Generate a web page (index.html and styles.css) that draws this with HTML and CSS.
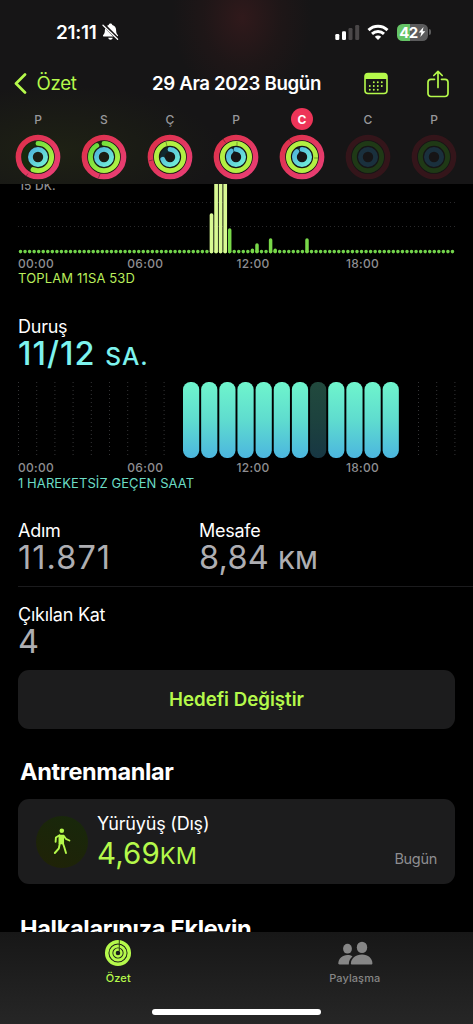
FILE: index.html
```html
<!DOCTYPE html>
<html lang="tr">
<head>
<meta charset="utf-8">
<title>Özet</title>
<link rel="stylesheet" href="styles.css">
</head>
<body>
<svg class="defs" width="0" height="0">
  <defs>
    <linearGradient id="move" x1="0" y1="0" x2="1" y2="1"><stop offset="0" stop-color="#dc3048"/><stop offset="1" stop-color="#e93f77"/></linearGradient>
    <linearGradient id="exercise" x1="1" y1="0" x2="0" y2="1"><stop offset="0" stop-color="#62d83c"/><stop offset="1" stop-color="#b8f545"/></linearGradient>
    <linearGradient id="stand" x1="1" y1="0" x2="0" y2="1"><stop offset="0" stop-color="#4fb4dc"/><stop offset="1" stop-color="#72efd8"/></linearGradient>
    <linearGradient id="hour" x1="0" y1="0" x2="0" y2="1"><stop offset="0" stop-color="#6ff5cc"/><stop offset=".5" stop-color="#5fdccf"/><stop offset="1" stop-color="#4cb6df"/></linearGradient>
  </defs>
</svg>
<div class="screen">
  <header class="header">
    <div class="status">
      <div class="status-left">
        <span class="time">21:11</span>
        <svg width="17" height="18" viewBox="0 0 17 18"><path d="M8.500 .6c1 0 1.700.7 1.800 1.400 2.400.7 3.800 2.500 3.800 5 0 3 .8 4 1.700 4.900.5.600.2 1.600-.7 1.600H1.900c-.9 0-1.200-1-.7-1.600.9-.9 1.700-1.900 1.700-4.900 0-2.500 1.400-4.300 3.800-5C6.800 1.300 7.500.6 8.500.6zM6.200 14.700h4.600c-.2 1.300-1.200 2-2.300 2s-2.100-.7-2.300-2z" fill="#fff"/><path d="M1.600 1.700l14.200 14.200" stroke="#171415" stroke-width="3.200"/><path d="M1 2.200l14.600 14" stroke="#fff" stroke-width="1.300" stroke-linecap="round"/></svg>
      </div>
      <div class="status-right">
        <svg width="25" height="17" viewBox="0 0 25 17"><g fill="#fff"><rect x=".3" y="10" width="4" height="6" rx="1.200"/><rect x="7" y="7.300" width="4" height="8.700" rx="1.200"/></g><g fill="#4a4748"><rect x="13.500" y="4" width="4" height="12" rx="1.200"/><rect x="20.200" y="1" width="4" height="15" rx="1.200"/></g></svg>
        <svg class="wifi" width="22" height="17" viewBox="0 0 22 17"><g fill="none" stroke="#fff" stroke-width="2.900"><path d="M1.500 6.100C6.800.9 15.200.9 20.500 6.100"/><path d="M5 9.900c3.400-3.200 8.600-3.200 12 0"/></g><path d="M7.800 12.700c1.900-1.700 4.500-1.700 6.400 0L11 16z" fill="#fff"/></svg>
        <div class="battery"><span>42</span><svg width="8" height="12" viewBox="0 0 9 12"><path d="M6.200.5L.8 6.700h3L2.600 11.500 8.200 5.200h-3z" fill="#fff"/></svg></div>
        <i class="battery-tip"></i>
      </div>
    </div>
    <nav class="navbar">
      <a class="back"><svg width="13" height="21" viewBox="0 0 13 21"><path d="M11 1.500L2 10.500l9 9" fill="none" stroke="#b5f94b" stroke-width="2.700" stroke-linecap="round" stroke-linejoin="round"/></svg><span>Özet</span></a>
      <h1 class="title">29 Ara 2023 Bugün</h1>
      <div class="actions">
        <svg width="24" height="23" viewBox="0 0 24 23"><rect x="1" y="1.500" width="22" height="20" rx="3" fill="none" stroke="#b5f94b" stroke-width="1.600"/><path d="M1 7V4.500a3 3 0 0 1 3-3h16a3 3 0 0 1 3 3V7z" fill="#b5f94b"/><g stroke="#b5f94b" stroke-width="1.900" stroke-linecap="round" stroke-dasharray="0 4"><path d="M9.800 10.200h8.200M5.800 14h12.300M5.800 17.700h8.300"/></g></svg>
        <svg width="22" height="28" viewBox="0 0 22 28"><g fill="none" stroke="#b5f94b" stroke-width="1.700" stroke-linecap="round" stroke-linejoin="round"><path d="M7.500 9.300H4a3 3 0 0 0-3 3v11.200a3 3 0 0 0 3 3h14a3 3 0 0 0 3-3V12.300a3 3 0 0 0-3-3h-3.500"/><path d="M11 17.500V1.500M6.800 5.500L11 1.300l4.200 4.200"/></g></svg>
      </div>
    </nav>
    <div class="week">
      <div class="day"><span class="letter">P</span>
        <svg class="rings" viewBox="0 0 46 46"><circle class="m" cx="23" cy="23" r="19.600"/><path d="M13 39.500l-2.500 3.500" class="seam"/><circle class="track" cx="23" cy="23" r="13.600"/><circle class="e" cx="23" cy="23" r="13.600" pathLength="100" stroke-dasharray="56 100"/><circle class="s" cx="23" cy="23" r="7.600"/></svg></div>
      <div class="day"><span class="letter">S</span>
        <svg class="rings" viewBox="0 0 46 46"><circle class="m" cx="23" cy="23" r="19.600"/><path d="M19 40l-1.500 4" class="seam"/><circle class="track" cx="23" cy="23" r="13.600"/><circle class="e" cx="23" cy="23" r="13.600" pathLength="100" stroke-dasharray="91 100"/><circle class="s" cx="23" cy="23" r="7.600"/></svg></div>
      <div class="day"><span class="letter">Ç</span>
        <svg class="rings" viewBox="0 0 46 46"><circle class="m" cx="23" cy="23" r="19.600"/><path d="M1.500 27l4-1" class="seam"/><circle class="e full" cx="23" cy="23" r="13.600"/><path d="M19 8l1 4" class="seam"/><circle class="track blue" cx="23" cy="23" r="7.600"/><circle class="s" cx="23" cy="23" r="7.600" pathLength="100" stroke-dasharray="70 100"/></svg></div>
      <div class="day"><span class="letter">P</span>
        <svg class="rings" viewBox="0 0 46 46"><circle class="m" cx="23" cy="23" r="19.600"/><path d="M10 5l2.500 3.500" class="seam"/><circle class="e full" cx="23" cy="23" r="13.600"/><path d="M24 8v4" class="seam"/><circle class="track blue" cx="23" cy="23" r="7.600"/><circle class="s" cx="23" cy="23" r="7.600" pathLength="100" stroke-dasharray="89 100"/></svg></div>
      <div class="day"><span class="letter selected">C</span>
        <svg class="rings" viewBox="0 0 46 46"><circle class="m" cx="23" cy="23" r="19.600"/><path d="M10 5l2.500 3.500" class="seam"/><circle class="e full" cx="23" cy="23" r="13.600"/><path d="M35 24h4" class="seam"/><circle class="track blue" cx="23" cy="23" r="7.600"/><circle class="s" cx="23" cy="23" r="7.600" pathLength="100" stroke-dasharray="88 100"/></svg></div>
      <div class="day"><span class="letter">C</span>
        <svg class="rings empty" viewBox="0 0 46 46"><circle class="m" cx="23" cy="23" r="19.600"/><circle class="e" cx="23" cy="23" r="13.600"/><circle class="s" cx="23" cy="23" r="7.600"/></svg></div>
      <div class="day"><span class="letter">P</span>
        <svg class="rings empty" viewBox="0 0 46 46"><circle class="m" cx="23" cy="23" r="19.600"/><circle class="e" cx="23" cy="23" r="13.600"/><circle class="s" cx="23" cy="23" r="7.600"/></svg></div>
    </div>
  </header>

  <main class="content">
    <section class="exercise">
      <div class="exercise-chart">
        <span class="scale">15 DK.</span>
        <svg width="437" height="71" viewBox="18 184 437 71">
          <g stroke="#29292b" stroke-width="1" stroke-dasharray="1 3"><path d="M18 202.500h437M18 226.500h437"/></g>
          <path d="M20.500 251.600H453" stroke="#72d34b" stroke-width="3.600" stroke-linecap="round" stroke-dasharray="0 4.547"/>
          <g stroke="#d9f994" stroke-width="3.700" stroke-linecap="round"><path d="M211.500 215v36.400M216.100 170v81.400M220.600 170v81.400M225.200 170v81.400"/></g>
          <g stroke="#79d849" stroke-width="3.500" stroke-linecap="round"><path d="M229.700 230v21.400M252.400 250.300v1M257 245v6.400M270.600 240v11.400M275.200 250.300v1M307 240v11.400"/></g>
        </svg>
      </div>
      <div class="hours"><span>00:00</span><span>06:00</span><span>12:00</span><span>18:00</span></div>
      <p class="summary green">TOPLAM 11SA 53D</p>
    </section>

    <section class="stand">
      <h2 class="label">Duruş</h2>
      <p class="value aqua">11/12 <small>SA.</small></p>
      <svg class="stand-chart" width="438" height="76" viewBox="18 382 438 76">
        <path stroke="#343436" stroke-width="1" stroke-dasharray="1 3" d="M18.500 382v76M36.700 382v76M54.900 382v76M73.100 382v76M91.300 382v76M109.500 382v76M127.700 382v76M145.900 382v76M164.100 382v76M418.500 382v76M436.700 382v76M454.900 382v76"/>
        <g fill="url(#hour)"><rect x="183" y="382" width="16.200" height="76" rx="7.500"/><rect x="201.150" y="382" width="16.200" height="76" rx="7.500"/><rect x="219.300" y="382" width="16.200" height="76" rx="7.500"/><rect x="237.450" y="382" width="16.200" height="76" rx="7.500"/><rect x="255.600" y="382" width="16.200" height="76" rx="7.500"/><rect x="273.750" y="382" width="16.200" height="76" rx="7.500"/><rect x="291.900" y="382" width="16.200" height="76" rx="7.500"/><rect x="310.050" y="382" width="16.200" height="76" rx="7.500" opacity=".3"/><rect x="328.200" y="382" width="16.200" height="76" rx="7.500"/><rect x="346.350" y="382" width="16.200" height="76" rx="7.500"/><rect x="364.500" y="382" width="16.200" height="76" rx="7.500"/><rect x="382.650" y="382" width="16.200" height="76" rx="7.500"/></g>
      </svg>
      <div class="hours"><span>00:00</span><span>06:00</span><span>12:00</span><span>18:00</span></div>
      <p class="summary teal">1 HAREKETSİZ GEÇEN SAAT</p>
    </section>

    <section class="stats">
      <div class="stat"><h2 class="label">Adım</h2><p class="value">11.871</p></div>
      <div class="stat"><h2 class="label">Mesafe</h2><p class="value distance">8,84 <small>KM</small></p></div>
    </section>
    <section class="stat floors"><h2 class="label">Çıkılan Kat</h2><p class="value">4</p></section>

    <button class="goal">Hedefi Değiştir</button>

    <h2 class="heading">Antrenmanlar</h2>
    <article class="workout">
      <div class="workout-icon">
        <svg width="18" height="27" viewBox="0 0 18 27"><circle cx="8.800" cy="2.800" r="2.300" fill="#b5f94b"/><path d="M6.300 7.500h4v8h-4z" fill="#b5f94b" stroke="#b5f94b" stroke-width="1.500" stroke-linejoin="round"/><g fill="none" stroke="#b5f94b" stroke-width="1.900" stroke-linecap="round" stroke-linejoin="round"><path d="M6.500 7.300L2.900 9.500l-.3 4.200M10.700 7.800l2.200 3 3.500 1.700M6.800 15.500l-1 5-4 4.500M10 15.500l1.300 3.800 1.700 5.700"/></g></svg>
      </div>
      <div class="workout-text"><h3>Yürüyüş (Dış)</h3><p>4,69<small>KM</small></p></div>
      <span class="when">Bugün</span>
    </article>
    <h2 class="heading next">Halkalarınıza Ekleyin</h2>
  </main>

  <footer class="tabbar">
    <div class="tabs">
      <div class="tab active">
        <svg width="28" height="28" viewBox="0 0 28 28"><g fill="none" stroke="#b5f94b"><circle cx="14" cy="14" r="11.300" stroke-width="3.500"/><circle cx="14" cy="14" r="7.100" stroke-width="3"/><circle cx="14" cy="14" r="3.500" stroke-width="2.400"/></g><path d="M15.300 1v11" stroke="#2c4312" stroke-width="1"/></svg>
        <span>Özet</span>
      </div>
      <div class="tab">
        <svg width="36" height="28" viewBox="0 0 36 28"><g fill="#868686"><ellipse cx="10.500" cy="9.700" rx="4.400" ry="4.900"/><path d="M1.300 24.800c0-5 4-8.700 9.200-8.700 1.900 0 3.600.500 5 1.300-2.300 1.700-3.600 4-3.700 8H2.500c-.8 0-1.200-.1-1.200-.6z"/><ellipse cx="25" cy="8.400" rx="5.200" ry="5.700"/><path d="M13.900 24.400c0-5 4.900-8.900 11.100-8.900s10.400 3.900 10.400 8.900c0 .8-.4 1-1.300 1H15.200c-.9 0-1.300-.2-1.300-1z"/></g></svg>
        <span>Paylaşma</span>
      </div>
    </div>
    <i class="home"></i>
  </footer>
</div>
</body>
</html>
```
FILE: styles.css
```css
* { box-sizing: border-box; margin: 0; padding: 0; }
body { background: #000; color: #fff; font-family: Inter, "Liberation Sans", sans-serif; }
svg { display: block; flex: none; }
.defs { position: absolute; }
.screen { width: 473px; height: 1024px; display: flex; flex-direction: column; overflow: hidden; background: #000; }

.header {
  flex: none; height: 184px;
  background:
    radial-gradient(ellipse 70px 85px at 242px 18px, #30191b, #24171899 55%, transparent),
    radial-gradient(ellipse 160px 65px at 60px 150px, #1e2114, transparent),
    #161516;
}
.status { height: 64px; padding: 0 42px 0 56px; display: flex; justify-content: space-between; align-items: center; }
.status-left { display: flex; align-items: center; gap: 5px; }
.time { font-size: 19px; font-weight: 600; letter-spacing: -.3px; }
.status-right { display: flex; align-items: center; }
.wifi { margin: 0 8px 0 7px; }
.battery { width: 31px; height: 17px; border-radius: 5.5px; display: flex; align-items: center; justify-content: center; background: linear-gradient(90deg, #65c466 43%, #5b5b5c 43%); font-size: 15px; font-weight: 700; letter-spacing: -.6px; }
.battery-tip { width: 2px; height: 6px; margin-left: 1px; border-radius: 0 2px 2px 0; background: #5b5b5c; }
.navbar { height: 39px; padding: 0 24px 0 14px; display: grid; grid-template-columns: 1fr auto 1fr; align-items: center; }
.back { display: flex; align-items: center; gap: 9.5px; color: #b5f94b; font-size: 18.7px; letter-spacing: -.35px; }
.title { font-size: 18.7px; font-weight: 600; letter-spacing: -.36px; transform: translateX(5px); }
.actions { display: flex; justify-content: flex-end; align-items: center; gap: 39px; }
.week { display: grid; grid-template-columns: repeat(7, 66px); padding-left: 5px; padding-top: 5px; }
.day { display: flex; flex-direction: column; align-items: center; gap: 4px; }
.letter { width: 22px; height: 22px; border-radius: 50%; display: grid; place-items: center; font-size: 12px; font-weight: 500; color: #98989b; }
.letter.selected { background: #ed3458; color: #fff; font-weight: 700; }
.rings { width: 46px; height: 46px; }
.rings circle { fill: none; stroke-width: 4.9; }
.rings .m { stroke: url(#move); stroke-width: 5.5; }
.rings .e, .rings .s { stroke-linecap: round; transform: rotate(-90deg); transform-origin: 23px 23px; }
.rings .e { stroke: #99ea43; }
.rings:not(.empty) .e:not(.full) { stroke: url(#exercise); }
.rings .full { stroke: #b2ef43; }
.rings .s { stroke: url(#stand); stroke-width: 4.8; }
.rings .track { stroke: #172b0c; }
.rings .track.blue { stroke: #10292e; }
.seam { stroke: #17151680; stroke-width: .8; }
.rings.empty .m { stroke: #34151a; }
.rings.empty .e { stroke: #1f3916; }
.rings.empty .s { stroke: #1a303d; }

.content { flex: 1; min-height: 0; overflow: hidden; padding: 0 18px; display: flex; flex-direction: column; }
.content > * { flex: none; }
.exercise-chart { height: 71px; position: relative; }
.scale { position: absolute; left: 1px; top: -5.500px; font-size: 12px; line-height: 14px; font-weight: 500; color: #8e8e91; letter-spacing: .1px; }
.hours { display: grid; grid-template-columns: repeat(4, 109.3px); height: 16px; line-height: 16px; font-size: 12px; font-weight: 500; letter-spacing: .3px; color: #8e8e91; }
.exercise .hours { margin-top: 1px; }
.summary { font-size: 13px; height: 16px; line-height: 16px; margin-top: -1px; letter-spacing: .08px; }
.exercise .summary { margin-top: -2px; letter-spacing: .15px; }
.green { color: #b9ed5b; }
.teal { color: #6cdcc5; }
.stand { padding-top: 30px; }
.label { font-size: 18px; font-weight: 400; line-height: 22px; letter-spacing: -.25px; }
.value { font-size: 32.5px; line-height: 32px; color: #aeaeb2; letter-spacing: 1.05px; font-weight: 400; white-space: nowrap; }
.value small { font-size: 24.500px; font-weight: 500; }
.value.aqua { color: #7df3ee; letter-spacing: 1px; font-weight: 450; }
.value.distance { letter-spacing: .2px; }
.stand-chart { margin-top: 10px; }
.stand .hours { margin-top: 2px; }
.stats { display: grid; grid-template-columns: 181px 1fr; height: 67px; margin-top: 29px; border-bottom: 1px solid #1b1b1d; margin-right: -18px; }
.floors { padding-top: 17px; height: 83px; }
.goal { height: 59px; border: 0; border-radius: 11px; background: #1c1c1d; color: #b5f94b; font: 600 18.7px Inter, sans-serif; letter-spacing: 0; }
.heading { font-size: 23.5px; font-weight: 700; line-height: 30px; letter-spacing: -.35px; padding-left: 2px; margin-top: 28px; }
.heading.next { margin-top: 30px; letter-spacing: -.3px; }
.workout { height: 85px; margin-top: 12px; padding: 0 18px; border-radius: 11px; background: #1c1c1d; display: flex; align-items: center; }
.workout-icon { width: 52px; height: 52px; border-radius: 50%; display: grid; place-items: center; background: linear-gradient(25deg, #202207, #17280b); }
.workout-text { flex: 1; padding-left: 9px; padding-top: 1px; }
.workout h3 { font-size: 18px; font-weight: 400; line-height: 24px; letter-spacing: -.2px; }
.workout p { font-size: 29.5px; line-height: 34px; letter-spacing: .1px; color: #b5f94b; }
.workout small { font-size: 23.5px; }
.when { align-self: flex-end; padding-bottom: 16px; font-size: 14.500px; line-height: 19px; letter-spacing: -.3px; color: #8e8e91; }

.tabbar { flex: none; height: 92px; background: linear-gradient(#171717, #262626); display: flex; flex-direction: column; align-items: center; }
.tabs { width: 100%; height: 77px; display: grid; grid-template-columns: 1fr 1fr; padding-top: 7px; }
.tab { display: flex; flex-direction: column; align-items: center; gap: 4px; font-size: 11px; line-height: 14px; font-weight: 500; letter-spacing: .1px; color: #868686; }
.active { color: #b5f94b; }
.home { width: 169px; height: 6px; border-radius: 3px; background: #fff; }
```
